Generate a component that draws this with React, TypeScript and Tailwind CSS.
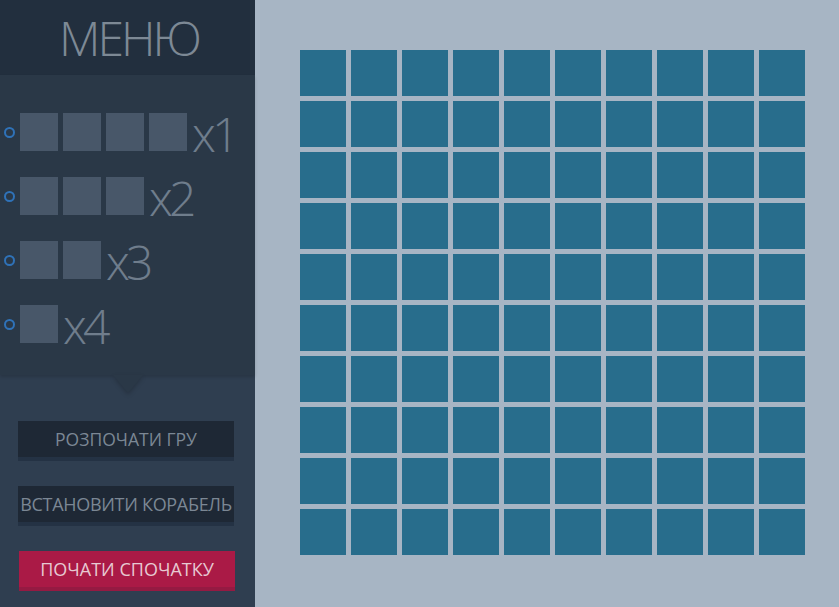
import React from "react";

const ships = [4, 3, 2, 1];

function ShipRow({ size, count }: { size: number; count: number }) {
  return (
    <div className="flex h-[38px] items-center">
      <span className="ml-[4px] mr-[5px] box-border h-[11px] w-[11px] rounded-full border-2 border-[#2f72b8]" />
      <div className="flex gap-[5px]">
        {Array.from({ length: size }).map((_, i) => (
          <div key={i} className="h-[38px] w-[38px] bg-[#485769]" />
        ))}
      </div>
      <span className="ml-[5px] mt-[4px] text-[48px] font-light leading-none tracking-[-4px] text-[#6f7d8c]">
        x{count}
      </span>
    </div>
  );
}

export default function App() {
  const cells = Array.from({ length: 100 });
  return (
    <div className="flex h-[607px] w-[839px] overflow-hidden font-['Open_Sans',sans-serif]">
      <aside className="flex w-[255px] flex-col bg-[#2f3e50]">
        <div className="flex h-[75px] items-center justify-center bg-[#222f3e]">
          <h1 className="pl-[3px] text-[48px] font-light leading-none tracking-[-3px] text-[#7d8995]">МЕНЮ</h1>
        </div>
        <div className="relative flex h-[300px] flex-col gap-[26px] bg-[#2a3847] pt-[38px] shadow-[0_2px_3px_rgba(0,0,0,0.15)]">
          {ships.map((s, i) => (
            <ShipRow key={s} size={s} count={i + 1} />
          ))}
          <div className="absolute left-[113px] top-full h-0 w-0 border-x-[15px] border-t-[18px] border-x-transparent border-t-[#2a3847] drop-shadow-[0_2px_2px_rgba(0,0,0,0.2)]" />
        </div>
        <div className="flex flex-col gap-[25px] pl-[18px] pt-[46px]">
          <button className="h-[40px] w-[216px] border-b-4 border-[#243244] bg-[#1e2835] text-[17.5px] text-[#7b8794]">
            РОЗПОЧАТИ ГРУ
          </button>
          <button className="h-[40px] w-[216px] whitespace-nowrap border-b-4 border-[#243244] bg-[#1e2835] text-[18px] tracking-[-0.3px] text-[#7b8794]">
            ВСТАНОВИТИ КОРАБЕЛЬ
          </button>
          <button className="ml-px h-[40px] w-[216px] border-b-4 border-[#951a42] bg-[#aa1a46] text-[18px] text-[#e7c9d2]">
            ПОЧАТИ СПОЧАТКУ
          </button>
        </div>
      </aside>
      <main className="flex-1 bg-[#a7b5c4] pl-[45px] pt-[50px]">
        <div className="grid w-[505px] grid-cols-10 gap-[5px]">
          {cells.map((_, i) => (
            <div key={i} className="h-[46px] w-[46px] bg-[#286d8c]" />
          ))}
        </div>
      </main>
    </div>
  );
}
